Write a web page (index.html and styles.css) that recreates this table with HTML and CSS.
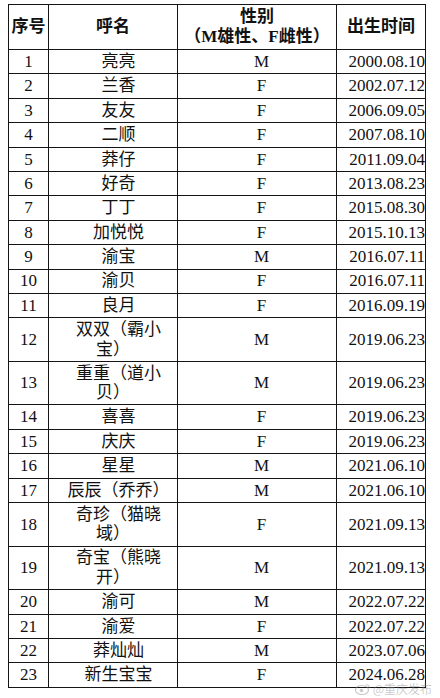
FILE: index.html
```html
<!DOCTYPE html>
<html lang="zh">
<head>
<meta charset="utf-8">
<link rel="stylesheet" href="styles.css">
</head>
<body>
<table class="roster">
  <colgroup>
    <col class="c-no"><col class="c-name"><col class="c-sex"><col class="c-date">
  </colgroup>
  <thead>
    <tr>
      <th>序号</th>
      <th>呼名</th>
      <th>性别<br>（M雄性、F雌性）</th>
      <th>出生时间</th>
    </tr>
  </thead>
  <tbody>
    <tr><td class="no">1</td><td class="name">亮亮</td><td class="sex">M</td><td class="date">2000.08.10</td></tr>
    <tr><td class="no">2</td><td class="name">兰香</td><td class="sex">F</td><td class="date">2002.07.12</td></tr>
    <tr><td class="no">3</td><td class="name">友友</td><td class="sex">F</td><td class="date">2006.09.05</td></tr>
    <tr><td class="no">4</td><td class="name">二顺</td><td class="sex">F</td><td class="date">2007.08.10</td></tr>
    <tr><td class="no">5</td><td class="name">莽仔</td><td class="sex">F</td><td class="date">2011.09.04</td></tr>
    <tr><td class="no">6</td><td class="name">好奇</td><td class="sex">F</td><td class="date">2013.08.23</td></tr>
    <tr><td class="no">7</td><td class="name">丁丁</td><td class="sex">F</td><td class="date">2015.08.30</td></tr>
    <tr><td class="no">8</td><td class="name">加悦悦</td><td class="sex">F</td><td class="date">2015.10.13</td></tr>
    <tr><td class="no">9</td><td class="name">渝宝</td><td class="sex">M</td><td class="date">2016.07.11</td></tr>
    <tr><td class="no">10</td><td class="name">渝贝</td><td class="sex">F</td><td class="date">2016.07.11</td></tr>
    <tr><td class="no">11</td><td class="name">良月</td><td class="sex">F</td><td class="date">2016.09.19</td></tr>
    <tr class="tall"><td class="no">12</td><td class="name">双双（霸小<span class="tail">宝）</span></td><td class="sex">M</td><td class="date">2019.06.23</td></tr>
    <tr class="tall"><td class="no">13</td><td class="name">重重（道小<span class="tail">贝）</span></td><td class="sex">M</td><td class="date">2019.06.23</td></tr>
    <tr><td class="no">14</td><td class="name">喜喜</td><td class="sex">F</td><td class="date">2019.06.23</td></tr>
    <tr><td class="no">15</td><td class="name">庆庆</td><td class="sex">F</td><td class="date">2019.06.23</td></tr>
    <tr><td class="no">16</td><td class="name">星星</td><td class="sex">M</td><td class="date">2021.06.10</td></tr>
    <tr><td class="no">17</td><td class="name">辰辰（乔乔）</td><td class="sex">M</td><td class="date">2021.06.10</td></tr>
    <tr class="tall"><td class="no">18</td><td class="name">奇珍（猫晓<span class="tail">域）</span></td><td class="sex">F</td><td class="date">2021.09.13</td></tr>
    <tr class="tall"><td class="no">19</td><td class="name">奇宝（熊晓<span class="tail">开）</span></td><td class="sex">M</td><td class="date">2021.09.13</td></tr>
    <tr><td class="no">20</td><td class="name">渝可</td><td class="sex">M</td><td class="date">2022.07.22</td></tr>
    <tr><td class="no">21</td><td class="name">渝爱</td><td class="sex">F</td><td class="date">2022.07.22</td></tr>
    <tr><td class="no">22</td><td class="name">莽灿灿</td><td class="sex">M</td><td class="date">2023.07.06</td></tr>
    <tr><td class="no">23</td><td class="name">新生宝宝</td><td class="sex">F</td><td class="date">2024.06.28</td></tr>
  </tbody>
</table>
<div class="watermark">
  <svg class="wm-logo" viewBox="0 0 16 12" width="16" height="12"><ellipse cx="7" cy="7" rx="6.5" ry="4.5" fill="none" stroke="currentColor" stroke-width="1.2"/><circle cx="6.5" cy="7.5" r="1.8" fill="currentColor"/><path d="M11 1.5a3.5 3.5 0 0 1 3.5 3.5" fill="none" stroke="currentColor" stroke-width="1"/></svg>
  <span>@重庆发布</span>
</div>
</body>
</html>
```

FILE: styles.css
```css
html, body {
  background: #fff;
}
body {
  margin: 4px 8px;
  position: relative;
  width: 424px;
  height: 694px;
  font-family: "Liberation Serif", "Noto Sans CJK SC", serif;
  color: #111;
}
.roster {
  border-collapse: collapse;
  table-layout: fixed;
  width: 417px;
  font-size: 17px;
}
.c-no { width: 40px; }
.c-name { width: 129px; }
.c-sex { width: 159px; }
.c-date { width: 89px; }
.roster th, .roster td {
  border: 1px solid #151515;
  padding: 0;
  text-align: center;
  vertical-align: middle;
  line-height: 19.5px;
}
.roster thead tr { height: 45px; }
.roster th {
  font-weight: bold;
  font-size: 17px;
  line-height: 20px;
}
.roster tbody tr { height: 24.4px; }
.roster tbody tr.tall { height: 43.6px; }
.roster td.name {
  padding-left: 11px;
}
.roster td.name .tail {
  display: block;
  margin-right: 11px;
}
.roster td.sex {
  padding-left: 9px;
}
.roster td.date {
  text-align: right;
  padding-right: 0;
}
.watermark {
  position: absolute;
  right: 0;
  bottom: 2px;
  display: flex;
  align-items: center;
  gap: 2px;
  white-space: nowrap;
  font-family: "Noto Sans CJK SC", sans-serif;
  font-size: 12px;
  line-height: 14px;
  color: rgba(140, 140, 140, 0.45);
}
.wm-logo { display: block; flex: none; }
```
